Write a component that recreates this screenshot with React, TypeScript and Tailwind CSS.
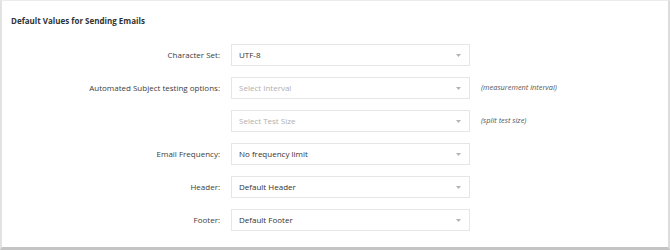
import React from 'react'

const FONT = "font-['Open_Sans',_'Liberation_Sans',_sans-serif]"

interface Row {
  label: string
  value: string
  placeholder?: boolean
  hint?: string
}

const ROWS: Row[] = [
  { label: 'Character Set:', value: 'UTF-8' },
  { label: 'Automated Subject testing options:', value: 'Select Interval', placeholder: true, hint: '(measurement interval)' },
  { label: '', value: 'Select Test Size', placeholder: true, hint: '(split test size)' },
  { label: 'Email Frequency:', value: 'No frequency limit' },
  { label: 'Header:', value: 'Default Header' },
  { label: 'Footer:', value: 'Default Footer' },
]

const Caret = () => (
  <svg width="5" height="3" viewBox="0 0 5 3" className="shrink-0">
    <path d="M0 0 L5 0 L2.5 3 Z" fill="#b3b3b3" />
  </svg>
)

export default function App() {
  return (
    <div className={`w-[670px] h-[250px] bg-[#f2f2f2] ${FONT}`}>
      <div className="w-full h-full bg-white border-l-2 border-r-2 border-t border-b-[3px] border-l-[#e2e2e2] border-r-[#dcdcdc] border-t-[#ececec] border-b-[#c4c4c4] flex flex-col">

        {/* Title */}
        <div className="h-[38px] pl-[9px] pt-[14px] text-[8px] leading-[12px] font-bold text-[#333]">
          Default Values for Sending Emails
        </div>

        {/* Form rows */}
        <div className="flex flex-col gap-[11px] pt-[5px]">
          {ROWS.map((row, i) => (
            <div key={i} className="flex items-center h-[22px]">
              <div className="w-[218px] text-right text-[8px] text-[#3c3c3c]">{row.label}</div>
              <div className="ml-[11px] w-[239px] h-[22px] border border-[#e6e6e6] flex items-center justify-between pl-[7px] pr-[8px]">
                <span className={`text-[8px] ${row.placeholder ? 'text-[#b0b0b0]' : 'text-[#333]'}`}>{row.value}</span>
                <Caret />
              </div>
              {row.hint && (
                <span className="ml-[11px] text-[7.4px] italic text-[#555]">{row.hint}</span>
              )}
            </div>
          ))}
        </div>

      </div>
    </div>
  )
}
